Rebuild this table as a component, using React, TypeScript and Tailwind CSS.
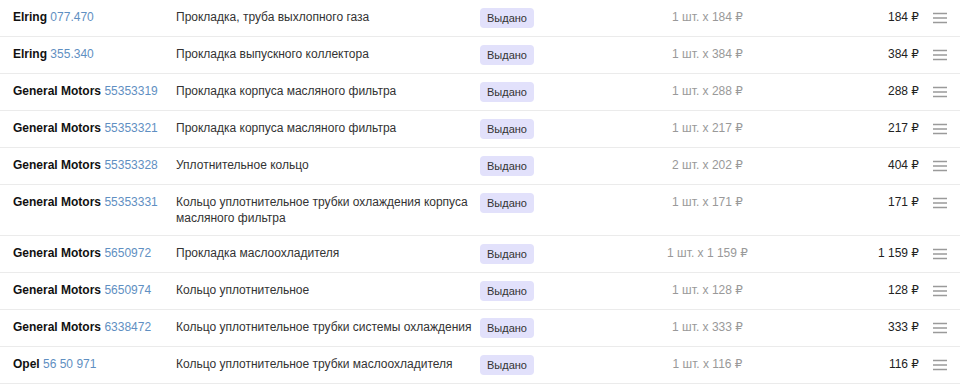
import React from 'react';

interface Item {
  brand: string;
  code: string;
  name: string;
  qty: number;
  price: string;
  total: string;
}

const items: Item[] = [
  { brand: 'Elring', code: '077.470', name: 'Прокладка, труба выхлопного газа', qty: 1, price: '184', total: '184' },
  { brand: 'Elring', code: '355.340', name: 'Прокладка выпускного коллектора', qty: 1, price: '384', total: '384' },
  { brand: 'General Motors', code: '55353319', name: 'Прокладка корпуса масляного фильтра', qty: 1, price: '288', total: '288' },
  { brand: 'General Motors', code: '55353321', name: 'Прокладка корпуса масляного фильтра', qty: 1, price: '217', total: '217' },
  { brand: 'General Motors', code: '55353328', name: 'Уплотнительное кольцо', qty: 2, price: '202', total: '404' },
  { brand: 'General Motors', code: '55353331', name: 'Кольцо уплотнительное трубки охлаждения корпуса масляного фильтра', qty: 1, price: '171', total: '171' },
  { brand: 'General Motors', code: '5650972', name: 'Прокладка маслоохладителя', qty: 1, price: '1 159', total: '1 159' },
  { brand: 'General Motors', code: '5650974', name: 'Кольцо уплотнительное', qty: 1, price: '128', total: '128' },
  { brand: 'General Motors', code: '6338472', name: 'Кольцо уплотнительное трубки системы охлаждения', qty: 1, price: '333', total: '333' },
  { brand: 'Opel', code: '56 50 971', name: 'Кольцо уплотнительное трубки маслоохладителя', qty: 1, price: '116', total: '116' },
];

const MenuIcon = () => (
  <svg width="14" height="12" viewBox="0 0 14 12" className="block">
    <path d="M0 1.5h14M0 6h14M0 10.5h14" stroke="#9a9a9a" strokeWidth="1.3" />
  </svg>
);

const App = () => {
  return (
    <div className="w-[960px] bg-white text-[12px] leading-[16px] text-[#333] font-['Liberation_Sans','DejaVu_Sans',Arial,sans-serif]">
      {items.map((item, i) => (
        <div key={i} className="flex items-start border-b border-[#ebebeb] py-[9px]">
          {/* Brand + part number */}
          <div className="w-[176px] shrink-0 pl-[13px]">
            <span className="font-bold text-[#111]">{item.brand}</span>{' '}
            <span className="text-[#5f8fc2]">{item.code}</span>
          </div>

          {/* Name */}
          <div className="w-[304px] shrink-0 pr-[8px]">{item.name}</div>

          {/* Status */}
          <div className="w-[120px] shrink-0">
            <span className="-my-px inline-flex h-[20px] items-center rounded-[4px] bg-[#e2e1fb] px-[7px] text-[11px] text-[#333]">
              Выдано
            </span>
          </div>

          {/* Quantity x price */}
          <div className="w-[215px] shrink-0 text-center text-[#999]">
            {item.qty} шт. x {item.price} ₽
          </div>

          {/* Total */}
          <div className="flex-1 text-right text-[#222]">{item.total} ₽</div>

          {/* Menu */}
          <div className="w-[41px] shrink-0 flex justify-end pr-[13px] pt-[3px]">
            <MenuIcon />
          </div>
        </div>
      ))}
    </div>
  );
};

export default App;
